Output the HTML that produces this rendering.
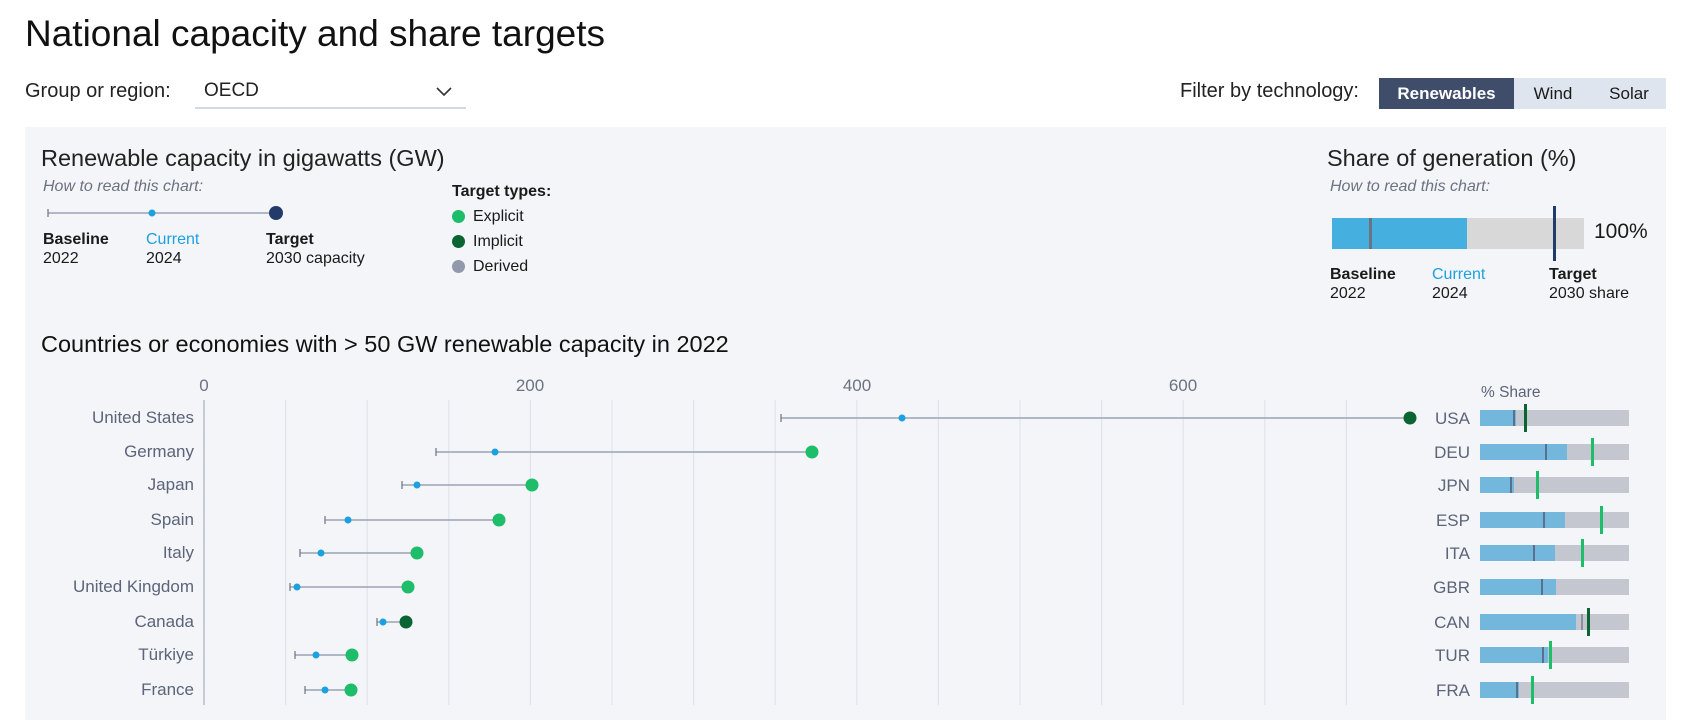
<!DOCTYPE html>
<html><head><meta charset="utf-8"><style>
*{margin:0;padding:0;box-sizing:border-box}
body{width:1690px;height:720px;background:#fff;font-family:"Liberation Sans",sans-serif;color:#1a1a1a;position:relative;overflow:hidden}
.a{position:absolute;white-space:nowrap}
</style></head><body>
<div class="a" style="left:25px;top:13px;font-size:37px;color:#111">National capacity and share targets</div>
<div class="a" style="left:25px;top:80px;font-size:20px;color:#222">Group or region:</div>
<div class="a" style="left:195px;top:76px;width:271px;height:33px;border-bottom:2px solid #d6d9e4"></div>
<div class="a" style="left:204px;top:80px;font-size:19px;color:#222">OECD</div>
<svg class="a" style="left:435px;top:86px" width="18" height="12"><path d="M2 2 L9 9 L16 2" fill="none" stroke="#333" stroke-width="1.6"/></svg>
<div class="a" style="left:1100px;top:80px;font-size:20px;color:#222;width:259px;text-align:right">Filter by technology:</div>
<div class="a" style="left:1379px;top:78px;width:135px;height:31px;background:#3f4d6b;color:#fff;font-weight:bold;font-size:17px;text-align:center;line-height:31px">Renewables</div>
<div class="a" style="left:1514px;top:78px;width:152px;height:31px;background:#dfe5ee"></div>
<div class="a" style="left:1514px;top:78px;width:78px;font-size:17px;text-align:center;line-height:31px">Wind</div>
<div class="a" style="left:1592px;top:78px;width:74px;font-size:17px;text-align:center;line-height:31px">Solar</div>
<div class="a" style="left:25px;top:127px;width:1641px;height:593px;background:#f4f5f9"></div>
<div class="a" style="left:41px;top:145px;font-size:23.5px;color:#222">Renewable capacity in gigawatts (GW)</div>
<div class="a" style="left:43px;top:178px;font-size:16px;font-style:italic;color:#6b7280">How to read this chart:</div>
<svg class="a" style="left:40px;top:200px" width="250" height="30"><line x1="8" y1="13" x2="236" y2="13" stroke="#9aa3b5" stroke-width="1.5"/><line x1="8" y1="9" x2="8" y2="17" stroke="#6b7280" stroke-width="1.2"/><circle cx="112" cy="13" r="3.5" fill="#1ba1e2"/><circle cx="236" cy="13" r="7" fill="#243b6a"/></svg>
<div class="a" style="left:43px;top:230px;font-size:16px;line-height:19px"><b style="font-weight:600">Baseline</b><br>2022</div>
<div class="a" style="left:146px;top:230px;font-size:16px;line-height:19px"><span style="color:#1ba1e2">Current</span><br>2024</div>
<div class="a" style="left:266px;top:230px;font-size:16px;line-height:19px"><b style="font-weight:600">Target</b><br>2030 capacity</div>
<div class="a" style="left:452px;top:183px;font-size:16px;font-weight:600">Target types:</div>
<div class="a" style="left:452px;top:204px;font-size:16px;line-height:25px">
<div><span style="display:inline-block;width:13px;height:13px;border-radius:50%;background:#1dbd6a;vertical-align:-2px;margin-right:8px"></span>Explicit</div>
<div><span style="display:inline-block;width:13px;height:13px;border-radius:50%;background:#0c6433;vertical-align:-2px;margin-right:8px"></span>Implicit</div>
<div><span style="display:inline-block;width:13px;height:13px;border-radius:50%;background:#9299ab;vertical-align:-2px;margin-right:8px"></span>Derived</div></div>
<div class="a" style="left:1327px;top:145px;font-size:23.5px;color:#222">Share of generation (%)</div>
<div class="a" style="left:1330px;top:178px;font-size:16px;font-style:italic;color:#6b7280">How to read this chart:</div>
<div class="a" style="left:1332px;top:218px;width:252px;height:31px;background:#d8d8d8"></div>
<div class="a" style="left:1332px;top:218px;width:135px;height:31px;background:#45b0e0"></div>
<div class="a" style="left:1369px;top:218px;width:3px;height:31px;background:#6b7280"></div>
<div class="a" style="left:1553px;top:206px;width:3px;height:55px;background:#243b6a"></div>
<div class="a" style="left:1594px;top:220px;font-size:21px">100%</div>
<div class="a" style="left:1330px;top:265px;font-size:16px;line-height:19px"><b style="font-weight:600">Baseline</b><br>2022</div>
<div class="a" style="left:1432px;top:265px;font-size:16px;line-height:19px"><span style="color:#1ba1e2">Current</span><br>2024</div>
<div class="a" style="left:1549px;top:265px;font-size:16px;line-height:19px"><b style="font-weight:600">Target</b><br>2030 share</div>
<div class="a" style="left:41px;top:331px;font-size:23.5px;color:#111">Countries or economies with &gt; 50 GW renewable capacity in 2022</div>
<svg class="a" style="left:0;top:0" width="1690" height="720" font-family="Liberation Sans, sans-serif">
<g stroke="#dde1ea" stroke-width="1">
<line x1="285.6" y1="400" x2="285.6" y2="705"/><line x1="367.2" y1="400" x2="367.2" y2="705"/><line x1="448.8" y1="400" x2="448.8" y2="705"/><line x1="530.4" y1="400" x2="530.4" y2="705"/><line x1="612" y1="400" x2="612" y2="705"/><line x1="693.6" y1="400" x2="693.6" y2="705"/><line x1="775.2" y1="400" x2="775.2" y2="705"/><line x1="856.8" y1="400" x2="856.8" y2="705"/><line x1="938.4" y1="400" x2="938.4" y2="705"/><line x1="1020" y1="400" x2="1020" y2="705"/><line x1="1101.6" y1="400" x2="1101.6" y2="705"/><line x1="1183.2" y1="400" x2="1183.2" y2="705"/><line x1="1264.8" y1="400" x2="1264.8" y2="705"/><line x1="1346.4" y1="400" x2="1346.4" y2="705"/>
</g>
<line x1="204" y1="400" x2="204" y2="705" stroke="#b7becc" stroke-width="1.5"/>
<g font-size="17" fill="#6b7280" text-anchor="middle"><text x="204" y="391">0</text><text x="530" y="391">200</text><text x="857" y="391">400</text><text x="1183" y="391">600</text></g>
<g font-size="17" fill="#5b6478" text-anchor="end">
<text x="194" y="423">United States</text><text x="194" y="457">Germany</text><text x="194" y="490">Japan</text><text x="194" y="525">Spain</text><text x="194" y="558">Italy</text><text x="194" y="592">United Kingdom</text><text x="194" y="627">Canada</text><text x="194" y="660">Türkiye</text><text x="194" y="695">France</text>
</g>
<g stroke="#9aa3b5" stroke-width="1.5">
<line x1="781" y1="418" x2="1410" y2="418"/><line x1="436" y1="452" x2="812" y2="452"/><line x1="402" y1="485" x2="532" y2="485"/><line x1="325" y1="520" x2="499" y2="520"/><line x1="300" y1="553" x2="417" y2="553"/><line x1="290" y1="587" x2="408" y2="587"/><line x1="377" y1="622" x2="406" y2="622"/><line x1="295" y1="655" x2="352" y2="655"/><line x1="305" y1="690" x2="351" y2="690"/>
</g>
<g stroke="#6b7280" stroke-width="1.2">
<line x1="781" y1="414" x2="781" y2="422"/><line x1="436" y1="448" x2="436" y2="456"/><line x1="402" y1="481" x2="402" y2="489"/><line x1="325" y1="516" x2="325" y2="524"/><line x1="300" y1="549" x2="300" y2="557"/><line x1="290" y1="583" x2="290" y2="591"/><line x1="377" y1="618" x2="377" y2="626"/><line x1="295" y1="651" x2="295" y2="659"/><line x1="305" y1="686" x2="305" y2="694"/>
</g>
<g fill="#1ba1e2">
<circle cx="902" cy="418" r="3.5"/><circle cx="495" cy="452" r="3.5"/><circle cx="417" cy="485" r="3.5"/><circle cx="348" cy="520" r="3.5"/><circle cx="321" cy="553" r="3.5"/><circle cx="297" cy="587" r="3.5"/><circle cx="383" cy="622" r="3.5"/><circle cx="316" cy="655" r="3.5"/><circle cx="325" cy="690" r="3.5"/>
</g>
<g fill="#1dbd6a">
<circle cx="812" cy="452" r="6.5"/><circle cx="532" cy="485" r="6.5"/><circle cx="499" cy="520" r="6.5"/><circle cx="417" cy="553" r="6.5"/><circle cx="408" cy="587" r="6.5"/><circle cx="352" cy="655" r="6.5"/><circle cx="351" cy="690" r="6.5"/>
</g>
<g fill="#0c6433"><circle cx="1410" cy="418" r="6.5"/><circle cx="406" cy="622" r="6.5"/></g>
<text x="1481" y="397" font-size="15.5" fill="#5b6478">% Share</text>
<g font-size="17" fill="#5b6478" text-anchor="end">
<text x="1470" y="424">USA</text><text x="1470" y="458">DEU</text><text x="1470" y="491">JPN</text><text x="1470" y="526">ESP</text><text x="1470" y="559">ITA</text><text x="1470" y="593">GBR</text><text x="1470" y="628">CAN</text><text x="1470" y="661">TUR</text><text x="1470" y="696">FRA</text>
</g>
<g fill="#c4c7d0">
<rect x="1480" y="410" width="149" height="16"/><rect x="1480" y="444" width="149" height="16"/><rect x="1480" y="477" width="149" height="16"/><rect x="1480" y="512" width="149" height="16"/><rect x="1480" y="545" width="149" height="16"/><rect x="1480" y="579" width="149" height="16"/><rect x="1480" y="614" width="149" height="16"/><rect x="1480" y="647" width="149" height="16"/><rect x="1480" y="682" width="149" height="16"/>
</g>
<g fill="#73b8dc">
<rect x="1480" y="410" width="36" height="16"/><rect x="1480" y="444" width="87" height="16"/><rect x="1480" y="477" width="34" height="16"/><rect x="1480" y="512" width="85" height="16"/><rect x="1480" y="545" width="75" height="16"/><rect x="1480" y="579" width="76" height="16"/><rect x="1480" y="614" width="96" height="16"/><rect x="1480" y="647" width="68" height="16"/><rect x="1480" y="682" width="39" height="16"/>
</g>
<g fill="#5b7090">
<rect x="1513" y="410" width="2" height="16"/><rect x="1545" y="444" width="2" height="16"/><rect x="1510" y="477" width="2" height="16"/><rect x="1543" y="512" width="2" height="16"/><rect x="1533" y="545" width="2" height="16"/><rect x="1541" y="579" width="2" height="16"/><rect x="1581" y="614" width="2" height="16" fill="#8a90a0"/><rect x="1542" y="647" width="2" height="16"/><rect x="1516" y="682" width="2" height="16"/>
</g>
<g fill="#1dbd6a">
<rect x="1591" y="438" width="3" height="28"/><rect x="1536" y="471" width="3" height="28"/><rect x="1600" y="506" width="3" height="28"/><rect x="1581" y="539" width="3" height="28"/><rect x="1587" y="608" width="3" height="28" fill="#0c6433"/><rect x="1549" y="641" width="3" height="28"/><rect x="1531" y="676" width="3" height="28"/>
</g>
<rect x="1524" y="404" width="3" height="28" fill="#0c6433"/>
</svg>
</body></html>
